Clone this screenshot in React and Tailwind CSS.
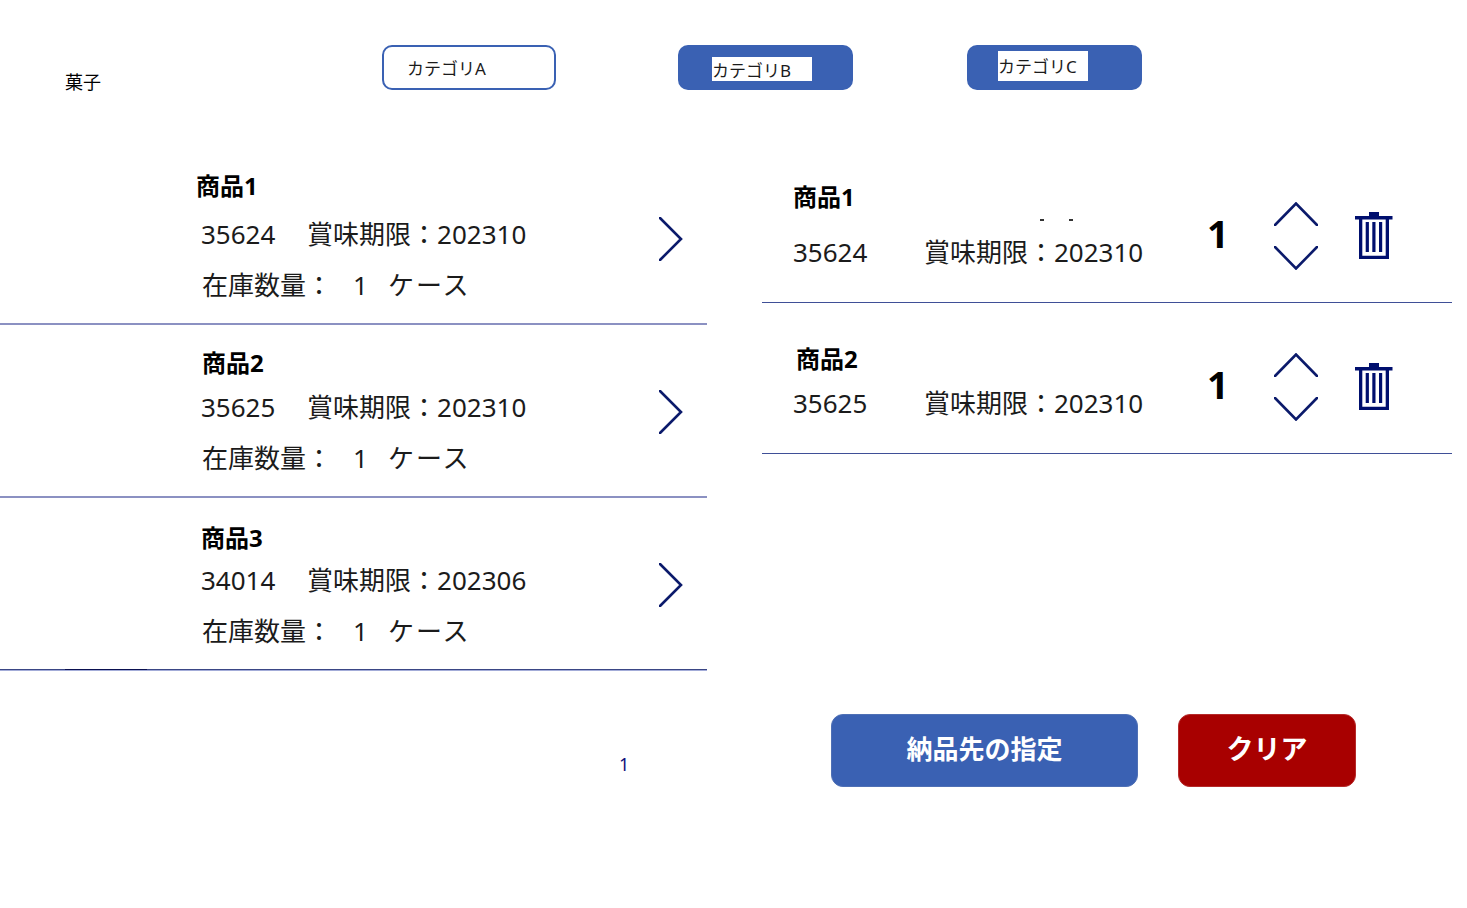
const font = { fontFamily: '"Noto Sans", "Noto Sans CJK JP", sans-serif' };

function ChevronRight() {
  return (
    <svg width="24" height="44" viewBox="0 0 24 44" fill="none" stroke="#0b1a6b" strokeWidth="2.6" strokeLinecap="round">
      <path d="M1 1 L22 22 L1 43" />
    </svg>
  );
}

function Steppers() {
  return (
    <div className="flex flex-col gap-[20px]">
      <svg width="44" height="24" viewBox="0 0 44 24" fill="none" stroke="#0b1a6b" strokeWidth="2.6" strokeLinecap="round">
        <path d="M1 23 L22 1.5 L43 23" />
      </svg>
      <svg width="44" height="24" viewBox="0 0 44 24" fill="none" stroke="#0b1a6b" strokeWidth="2.6" strokeLinecap="round">
        <path d="M1 1 L22 22.5 L43 1" />
      </svg>
    </div>
  );
}

function Trash() {
  return (
    <svg width="38" height="48" viewBox="0 0 38 48" fill="#000f6e">
      <rect x="14" y="0" width="10" height="4.5" />
      <rect x="0" y="4" width="37.5" height="3.5" />
      <path d="M4 7 H34 V47 H4 Z M7.3 7 V43.7 H30.7 V7 Z" fillRule="evenodd" />
      <rect x="10.7" y="10" width="3.2" height="30" />
      <rect x="17.3" y="10" width="3.2" height="30" />
      <rect x="24" y="10" width="3.2" height="30" />
    </svg>
  );
}

function ProductRow({ name, code, date, titleTop, titleLeft, titleH, border, mark }) {
  return (
    <div className={`relative h-[173px] ${border} flex`}>
      <div className="pl-[201px] flex flex-col flex-1">
        <div className={`font-bold text-[24px] leading-[30px] text-black ${titleTop} ${titleLeft}`}>{name}</div>
        <div className={`flex text-[26px] leading-[36px] text-[#1b1b1b] ${titleH} whitespace-pre`}>
          <span className="w-[106px]">{code}</span>
          <span>賞味期限：{date}</span>
        </div>
        <div className="mt-[15px] ml-[1px] flex items-center text-[26px] leading-[36px] text-[#1b1b1b] whitespace-pre">
          <span>在庫数量：</span>
          <span className="ml-[21px]">1</span>
          <span className="ml-[20px] tracking-[2px]">ケース</span>
        </div>
      </div>
      <div className="w-[48px] pt-[65px] shrink-0">
        <ChevronRight />
      </div>
      {mark && (
        <>
          <div className="absolute left-0 right-0 bottom-0 h-[1px] bg-[#3a4685]" />
          <div className="absolute left-[65px] bottom-0 w-[82px] h-[1px] bg-[#0a1050]" />
        </>
      )}
    </div>
  );
}

function CartRow({ name, code, titleTop, titleLeft, gap, specks }) {
  return (
    <div className="relative h-[151px] border-b border-[#3f4f97] flex items-start">
      <div className="pl-[31px] w-[445px] shrink-0">
        <div className={`font-bold text-[24px] leading-[30px] text-black ${titleTop} ${titleLeft}`}>{name}</div>
        <div className={`flex text-[26px] leading-[36px] text-[#1b1b1b] whitespace-pre ${gap}`}>
          <span className="w-[131px]">{code}</span>
          <span>賞味期限：202310</span>
        </div>
      </div>
      <div className="w-[67px] pt-[56px] font-bold text-[38px] leading-[50px] text-black">1</div>
      <div className="pt-[50px]">
        <Steppers />
      </div>
      <div className="ml-[37px] pt-[60px]">
        <Trash />
      </div>
      {specks && (
        <>
          <span className="absolute left-[278px] top-[67px] w-[4px] h-[1.5px] bg-[#333]" />
          <span className="absolute left-[307px] top-[67px] w-[4px] h-[1.5px] bg-[#333]" />
        </>
      )}
    </div>
  );
}

export default function App() {
  return (
    <div className="w-[1467px] h-[908px] bg-white overflow-hidden" style={font}>
      <div className="h-[152px] flex items-start pt-[45px] text-[17px] leading-[24px]">
        <div className="w-[382px] pl-[65px] pt-[25px] text-[18px] text-black shrink-0">菓子</div>
        <div className="w-[174px] h-[45px] rounded-[10px] border-2 border-[#3a61b3] pl-[23px] pt-[10px] text-[#1b1b1b]">カテゴリA</div>
        <div className="ml-[122px] w-[175px] h-[45px] rounded-[10px] bg-[#3a61b3] pl-[34px] pt-[12px]">
          <div className="w-[100px] h-[24px] bg-white text-[#1b1b1b] pt-[4px] leading-[20px] whitespace-nowrap">カテゴリB</div>
        </div>
        <div className="ml-[114px] w-[175px] h-[45px] rounded-[10px] bg-[#3a61b3] pl-[31px] pt-[6px]">
          <div className="w-[90px] h-[30px] bg-white text-[#1b1b1b] pt-[2px] leading-[28px] whitespace-nowrap">カテゴリC</div>
        </div>
      </div>

      <div className="flex items-start">
        <div className="w-[707px] shrink-0">
          <ProductRow name="商品1" code="35624" date="202310" titleTop="mt-[19px]" titleLeft="-ml-[5px]" titleH="mt-[15px]" border="border-b-2 border-[#8b91c2]" />
          <ProductRow name="商品2" code="35625" date="202310" titleTop="mt-[23px]" titleLeft="ml-[1px]" titleH="mt-[11px]" border="border-b-2 border-[#8b91c2]" />
          <ProductRow name="商品3" code="34014" date="202306" titleTop="mt-[25px]" titleLeft="" titleH="mt-[9px]" border="border-b border-[#a3acd8]" mark />
          <div className="pl-[619px] pt-[81px] text-[18px] leading-[24px] text-[#10107a]">1</div>
        </div>

        <div className="ml-[55px] w-[690px] shrink-0">
          <CartRow name="商品1" code="35624" titleTop="mt-[30px]" titleLeft="" gap="mt-[22px]" specks />
          <CartRow name="商品2" code="35625" titleTop="mt-[41px]" titleLeft="ml-[3px]" gap="mt-[11px]" />
          <div className="mt-[260px] pl-[69px] flex gap-[40px]">
            <button className="w-[307px] h-[73px] rounded-[12px] bg-[#3a61b3] border border-[#4f70b5] text-white font-bold text-[26px] pb-[3px]">納品先の指定</button>
            <button className="w-[178px] h-[73px] rounded-[12px] bg-[#a80000] border border-[#b52a2a] text-white font-bold text-[27px] pb-[3px]">クリア</button>
          </div>
        </div>
      </div>
    </div>
  );
}
